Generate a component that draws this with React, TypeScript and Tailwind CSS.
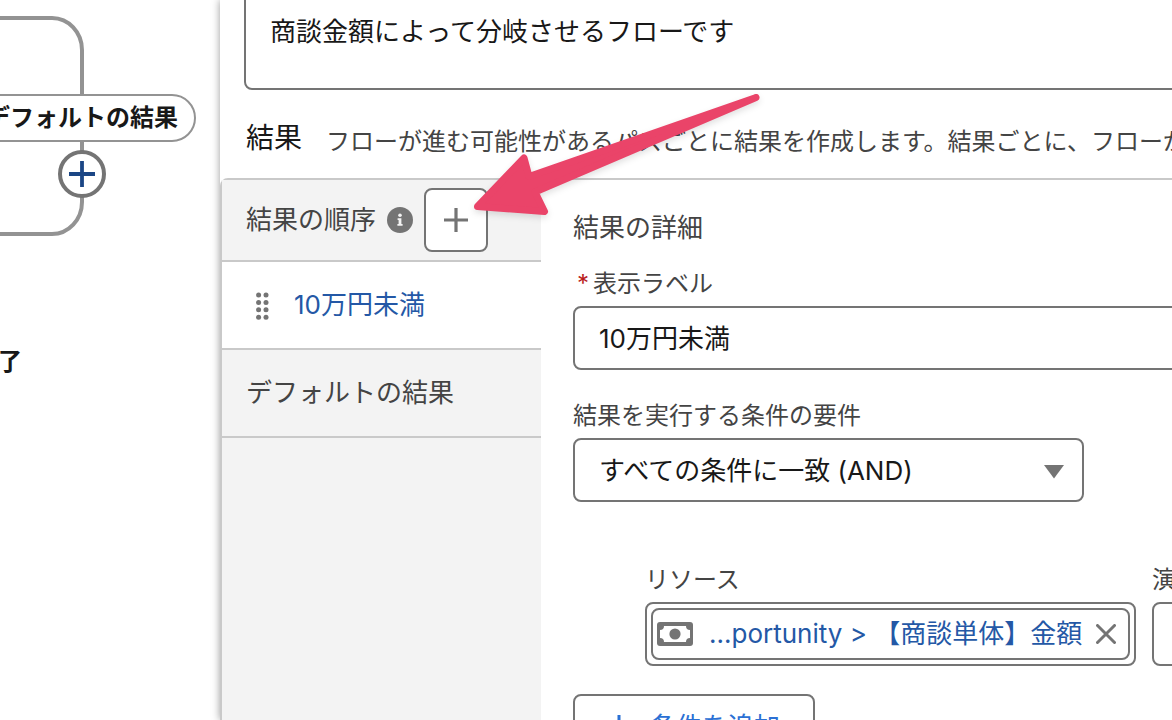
import { useState } from "react";

interface Outcome {
  id: string;
  label: string;
  draggable: boolean;
}

const outcomes: Outcome[] = [
  { id: "under", label: "10万円未満", draggable: true },
  { id: "default", label: "デフォルトの結果", draggable: false },
];

const dots = [0, 1, 2, 3];

function DragHandle() {
  return (
    <svg width="14" height="30" viewBox="0 0 14 30" fill="#747474" aria-hidden="true">
      {dots.map((i) => (
        <g key={i}>
          <circle cx="2.6" cy={5 + i * 7.4} r="2.5" />
          <circle cx="10" cy={5 + i * 7.4} r="2.5" />
        </g>
      ))}
    </svg>
  );
}

function InfoIcon() {
  return (
    <svg width="26" height="26" viewBox="0 0 26 26" aria-hidden="true">
      <circle cx="13" cy="13" r="13" fill="#747474" />
      <circle cx="13" cy="8.2" r="1.8" fill="#f3f3f3" />
      <path d="M10.6 11.2H14.4V17H15.6V18.8H10.4V17H11.6V13H10.6Z" fill="#f3f3f3" />
    </svg>
  );
}

function CurrencyIcon() {
  return (
    <svg width="36" height="24" viewBox="0 0 36 24" aria-hidden="true">
      <rect width="36" height="24" rx="3" fill="#747474" />
      <path
        d="M7 4H29A4 4 0 0 0 33 8V16A4 4 0 0 0 29 20H7A4 4 0 0 0 3 16V8A4 4 0 0 0 7 4Z"
        fill="#fff"
      />
      <circle cx="18" cy="12" r="5.6" fill="#747474" />
    </svg>
  );
}

function FlowCanvas() {
  return (
    <div className="relative w-[220px] shrink-0 overflow-hidden bg-white">
      <svg className="absolute left-0 top-0" width="220" height="260" fill="none" aria-hidden="true">
        <path d="M-4 18H52A30 32 0 0 1 82 50V202A30 32 0 0 1 52 234H-4" stroke="#939393" strokeWidth="4" />
      </svg>
      <div className="absolute right-[24px] top-[94px] flex h-12 items-center rounded-full border-2 border-[#939393] bg-white px-4 text-2xl font-bold whitespace-nowrap text-[#181818]">
        デフォルトの結果
      </div>
      <button
        type="button"
        aria-label="要素を追加"
        className="absolute left-[58px] top-[150px] flex size-12 items-center justify-center rounded-full border-4 border-[#747474] bg-white"
      >
        <svg className="shrink-0" width="28" height="28" viewBox="0 0 28 28" aria-hidden="true">
          <path d="M14 1V27M1 14H27" stroke="#1b4685" strokeWidth="3.8" />
        </svg>
      </button>
      <div className="absolute right-[198px] top-[346px] text-2xl font-bold whitespace-nowrap text-[#181818]">
        終了
      </div>
    </div>
  );
}

function OutcomeList({ selected, onSelect }: { selected: string; onSelect: (id: string) => void }) {
  return (
    <aside className="w-[319px] shrink-0 bg-[#f3f3f3]">
      <div className="flex h-[82px] items-center border-b-2 border-[#c9c9c9] pl-6">
        <h3 className="text-[26px] leading-9 text-[#444]">結果の順序</h3>
        <span className="ml-[11px] shrink-0">
          <InfoIcon />
        </span>
        <button
          type="button"
          aria-label="結果を追加"
          className="ml-[11px] flex size-16 items-center justify-center rounded-lg border-2 border-[#747474] bg-white"
        >
          <svg width="24" height="24" viewBox="0 0 24 24" aria-hidden="true">
            <path d="M12 0V24M0 12H24" stroke="#747474" strokeWidth="3.2" />
          </svg>
        </button>
      </div>
      <ul>
        {outcomes.map((o) => (
          <li key={o.id}>
            <button
              type="button"
              onClick={() => onSelect(o.id)}
              className={
                "flex h-[88px] w-full items-center gap-6 border-b-2 border-[#c9c9c9] text-left text-[26px] leading-9 " +
                (selected === o.id ? "bg-white text-[#2458a6] " : "text-[#444] ") +
                (o.draggable ? "pl-[34px]" : "pl-6")
              }
            >
              {o.draggable && <DragHandle />}
              {o.label}
            </button>
          </li>
        ))}
      </ul>
    </aside>
  );
}

function OutcomeDetails() {
  const [label, setLabel] = useState("10万円未満");

  return (
    <section className="min-w-0 flex-1 pl-8 pt-[30px]">
      <h3 className="text-[26px] leading-9 text-[#444]">結果の詳細</h3>

      <label htmlFor="label" className="mt-[22px] flex h-8 items-center gap-1 pl-1 text-2xl text-[#444]">
        <span className="text-[#b91c1c]">*</span>
        表示ラベル
      </label>
      <input
        id="label"
        value={label}
        onChange={(e) => setLabel(e.target.value)}
        className="mt-1.5 block h-16 w-[calc(100%+16px)] rounded-lg border-2 border-[#747474] bg-white px-6 pb-1 text-[26px] text-[#181818]"
      />

      <label htmlFor="logic" className="mt-7.5 flex h-8 items-center text-2xl text-[#444]">
        結果を実行する条件の要件
      </label>
      <div className="relative mt-1.5 w-[511px] max-w-full">
        <select
          id="logic"
          className="block h-16 w-full appearance-none rounded-lg border-2 border-[#747474] bg-white px-6 text-[26px] text-[#181818]"
        >
          <option>すべての条件に一致 (AND)</option>
          <option>いずれかの条件に一致 (OR)</option>
        </select>
        <svg className="pointer-events-none absolute right-5 top-[27px]" width="20" height="14" aria-hidden="true">
          <path d="M0 0H20L10 13.5Z" fill="#747474" />
        </svg>
      </div>

      <div className="mt-15.5 flex gap-4 pl-18">
        <div className="w-[491px] shrink-0">
          <div className="flex h-8 items-center text-2xl text-[#444]">リソース</div>
          <div className="mt-1.5 h-16 rounded-lg border-2 border-[#747474] p-1">
            <div className="flex h-full items-center rounded-lg border-2 border-[#747474] pl-1 pr-3">
              <CurrencyIcon />
              <a href="#resource" className="ml-4 flex-1 text-[26px] leading-9 whitespace-nowrap text-[#2458a6]">
                ...portunity &gt; 【商談単体】金額
              </a>
              <button type="button" aria-label="選択を解除" className="shrink-0">
                <svg width="20" height="20" viewBox="0 0 20 20" aria-hidden="true">
                  <path d="M1.5 1.5L18.5 18.5M18.5 1.5L1.5 18.5" stroke="#747474" strokeWidth="3" strokeLinecap="round" />
                </svg>
              </button>
            </div>
          </div>
        </div>
        <div className="w-[280px] shrink-0">
          <label htmlFor="operator" className="flex h-8 items-center text-2xl text-[#444]">
            演算子
          </label>
          <select
            id="operator"
            className="mt-1.5 block h-16 w-full appearance-none rounded-lg border-2 border-[#747474] bg-white px-6 text-[26px] text-[#181818]"
          >
            <option>以下</option>
          </select>
        </div>
      </div>

      <button
        type="button"
        className="mt-7 flex h-16 w-[242px] items-center justify-center gap-5 rounded-lg border-2 border-[#747474] bg-white text-[26px] whitespace-nowrap text-[#2b70d4]"
      >
        <svg className="shrink-0" width="22" height="22" viewBox="0 0 22 22" aria-hidden="true">
          <path d="M11 0V22M0 11H22" stroke="#2b70d4" strokeWidth="3" />
        </svg>
        条件を追加
      </button>
    </section>
  );
}

// callout arrow pointing at the add button
function Arrow() {
  return (
    <svg
      className="pointer-events-none absolute left-[460px] top-[80px] drop-shadow-md"
      width="320"
      height="150"
      viewBox="460 80 320 150"
      aria-hidden="true"
    >
      <path
        d="M477.5 206.5L524 158L529 176.5L756 97.5L535 192L544.5 211.5Z"
        fill="#ea4469"
        stroke="#ea4469"
        strokeWidth="7"
        strokeLinejoin="round"
      />
    </svg>
  );
}

export default function App() {
  const [selected, setSelected] = useState("under");

  return (
    <div className="relative flex h-screen overflow-hidden bg-white font-[Inter,'Noto_Sans_CJK_JP',sans-serif]">
      <FlowCanvas />
      <main className="relative flex min-w-0 flex-1 flex-col bg-white shadow-[0_0_8px_rgba(0,0,0,0.4)]">
        <div className="pl-6">
          <textarea
            aria-label="説明"
            readOnly
            value="商談金額によって分岐させるフローです"
            className="-mt-2 block h-[98px] w-[calc(100%+16px)] resize-none rounded-lg border-2 border-[#747474] px-6 py-5 text-[26px] leading-9 text-[#181818]"
          />
          <div className="flex h-[88px] items-center gap-6 overflow-hidden whitespace-nowrap pl-0.5 pt-2">
            <h2 className="text-[28px] leading-9 text-[#181818]">結果</h2>
            <p className="pt-2 text-2xl text-[#444]">
              フローが進む可能性があるパスごとに結果を作成します。結果ごとに、フローがそのパスを進むために満たす必要がある条件を指定します。
            </p>
          </div>
        </div>
        <div className="flex flex-1 rounded-tl-lg border-t-2 border-l-2 border-[#c9c9c9]">
          <OutcomeList selected={selected} onSelect={setSelected} />
          <OutcomeDetails />
        </div>
      </main>
      <Arrow />
    </div>
  );
}
